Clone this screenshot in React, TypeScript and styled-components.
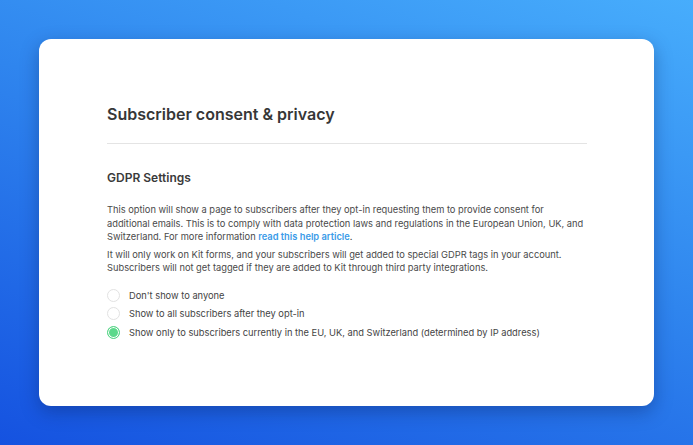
import React, { useState } from "react"
import styled, { createGlobalStyle } from "styled-components"

const Global = createGlobalStyle`
  html, body { margin: 0; padding: 0; }
  body {
    font-family: Inter, "Noto Sans", sans-serif;
    -webkit-font-smoothing: antialiased;
  }
`

const Page = styled.div`
  width: 693px;
  height: 445px;
  box-sizing: border-box;
  padding: 39px;
  background: linear-gradient(200deg, #47adfc 0%, #2f85ee 45%, #1552e0 100%);
`

const Card = styled.div`
  height: 367px;
  box-sizing: border-box;
  background: #fff;
  border-radius: 12px;
  box-shadow: 0 6px 18px rgba(10, 30, 90, 0.35);
  padding: 64px 67px 0 68px;
`

const Title = styled.h1`
  margin: 0;
  font-size: 16px;
  font-weight: 600;
  color: #373737;
  line-height: 22px;
`

const Divider = styled.hr`
  margin: 18px 0 0;
  border: 0;
  border-top: 1px solid #e4e4e4;
`

const Section = styled.h2`
  margin: 26px 0 0;
  font-size: 12px;
  font-weight: 600;
  color: #3a3a3a;
  line-height: 16px;
`

const Text = styled.p`
  margin: 17px 0 0;
  font-size: 9.3px;
  line-height: 13.5px;
  color: #4a4a4a;
  & + & {
    margin-top: 4px;
  }
`

const Link = styled.a`
  color: #3b9be8;
  font-weight: 600;
  text-decoration: none;
  line-height: 1;
`

const Options = styled.div`
  margin-top: 14px;
  display: flex;
  flex-direction: column;
  gap: 5.5px;
`

const Option = styled.label`
  display: flex;
  align-items: center;
  gap: 9px;
  font-size: 9.3px;
  color: #444;
  cursor: pointer;
  line-height: 13px;
`

const Dot = styled.span<{ $on: boolean }>`
  width: 13px;
  height: 13px;
  box-sizing: border-box;
  border-radius: 50%;
  border: 1px solid ${p => (p.$on ? "#56d486" : "#e2e2e2")};
  background: ${p => (p.$on ? "#5bd98b" : "#fff")};
  box-shadow: ${p => (p.$on ? "inset 0 0 0 1px #fff" : "none")};
  flex-shrink: 0;
`

const options = [
  "Don't show to anyone",
  "Show to all subscribers after they opt-in",
  "Show only to subscribers currently in the EU, UK, and Switzerland (determined by IP address)",
]

export default function App() {
  const [sel, setSel] = useState(2)
  return (
    <Page>
      <Global />
      <Card>
        <Title>Subscriber consent &amp; privacy</Title>
        <Divider />
        <Section>GDPR Settings</Section>
        <Text>
          This option will show a page to subscribers after they opt-in requesting them to provide consent for
          additional emails. This is to comply with data protection laws and regulations in the European Union, UK, and
          Switzerland. For more information <Link href="#">read this help article</Link>.
        </Text>
        <Text>
          It will only work on Kit forms, and your subscribers will get added to special GDPR tags in your account.
          Subscribers will not get tagged if they are added to Kit through third party integrations.
        </Text>
        <Options>
          {options.map((o, i) => (
            <Option key={i} onClick={() => setSel(i)}>
              <Dot $on={sel === i} />
              {o}
            </Option>
          ))}
        </Options>
      </Card>
    </Page>
  )
}
